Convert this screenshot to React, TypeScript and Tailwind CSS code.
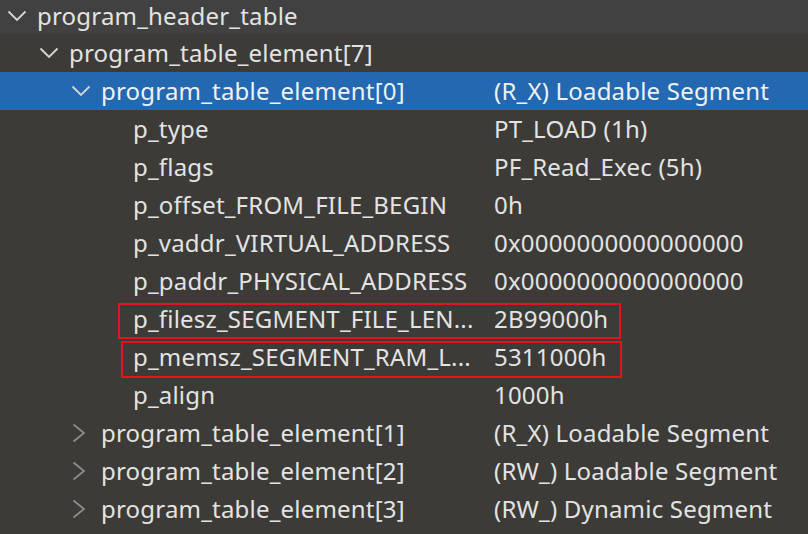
import React from "react";

type Row = {
  level: number;
  name: string;
  value?: string;
  chevron?: "down" | "right";
  selected?: boolean;
  top?: boolean;
  box?: { left: number; width: number; top: number; height: number };
};

const rows: Row[] = [
  { level: 0, name: "program_header_table", chevron: "down", top: true },
  { level: 1, name: "program_table_element[7]", chevron: "down" },
  { level: 2, name: "program_table_element[0]", value: "(R_X) Loadable Segment", chevron: "down", selected: true },
  { level: 3, name: "p_type", value: "PT_LOAD (1h)" },
  { level: 3, name: "p_flags", value: "PF_Read_Exec (5h)" },
  { level: 3, name: "p_offset_FROM_FILE_BEGIN", value: "0h" },
  { level: 3, name: "p_vaddr_VIRTUAL_ADDRESS", value: "0x0000000000000000" },
  { level: 3, name: "p_paddr_PHYSICAL_ADDRESS", value: "0x0000000000000000" },
  { level: 3, name: "p_filesz_SEGMENT_FILE_LEN...", value: "2B99000h", box: { left: 118, width: 503, top: 3, height: 36 } },
  { level: 3, name: "p_memsz_SEGMENT_RAM_L...", value: "5311000h", box: { left: 121, width: 501, top: 3, height: 37 } },
  { level: 3, name: "p_align", value: "1000h" },
  { level: 2, name: "program_table_element[1]", value: "(R_X) Loadable Segment", chevron: "right" },
  { level: 2, name: "program_table_element[2]", value: "(RW_) Loadable Segment", chevron: "right" },
  { level: 2, name: "program_table_element[3]", value: "(RW_) Dynamic Segment", chevron: "right" },
];

const Down = ({ color }: { color: string }) => (
  <svg width="20" height="12" viewBox="0 0 20 12" fill="none">
    <path d="M1.5 1.5 L10 10 L18.5 1.5" stroke={color} strokeWidth="1.8" />
  </svg>
);

const Right = () => (
  <svg width="14" height="20" viewBox="0 0 14 20" fill="none">
    <path d="M1.5 1.5 L12 10 L1.5 18.5" stroke="#8c8c8c" strokeWidth="1.8" />
  </svg>
);

export default function App() {
  return (
    <div
      className="w-[808px] h-[534px] overflow-hidden bg-[#3c3b37] text-[#e3e3e3]"
      style={{ fontFamily: '"Noto Sans", "Open Sans", sans-serif' }}
    >
      {rows.map((r, i) => (
        <div
          key={i}
          className={`relative flex items-center text-[24px] leading-none tracking-[0.2px] ${
            r.top ? "h-[34px] pb-[1px]" : "h-[38px]"
          } ${r.selected ? "bg-[#2368b1] text-[#eef2f7]" : r.top ? "bg-[#414141]" : ""}`}
        >
          <div
            className="flex items-center w-[494px] shrink-0"
            style={{ paddingLeft: 37 + r.level * 32 }}
          >
            <span className="relative w-0 h-full">
              {r.chevron === "down" && (
                <span className={`absolute left-[-30px] ${r.top ? "top-[-7px]" : "top-[-6px]"}`}>
                  <Down color="#d6d6d6" />
                </span>
              )}
              {r.chevron === "right" && (
                <span className="absolute left-[-29px] top-[-10px]">
                  <Right />
                </span>
              )}
            </span>
            <span className="whitespace-nowrap pb-[1px]">{r.name}</span>
          </div>
          {r.value && <span className="whitespace-nowrap pb-[1px]">{r.value}</span>}
          {r.box && (
            <div
              className="absolute border-2 border-[#e3141e]"
              style={{ left: r.box.left, width: r.box.width, top: r.box.top, height: r.box.height }}
            />
          )}
        </div>
      ))}
    </div>
  );
}
